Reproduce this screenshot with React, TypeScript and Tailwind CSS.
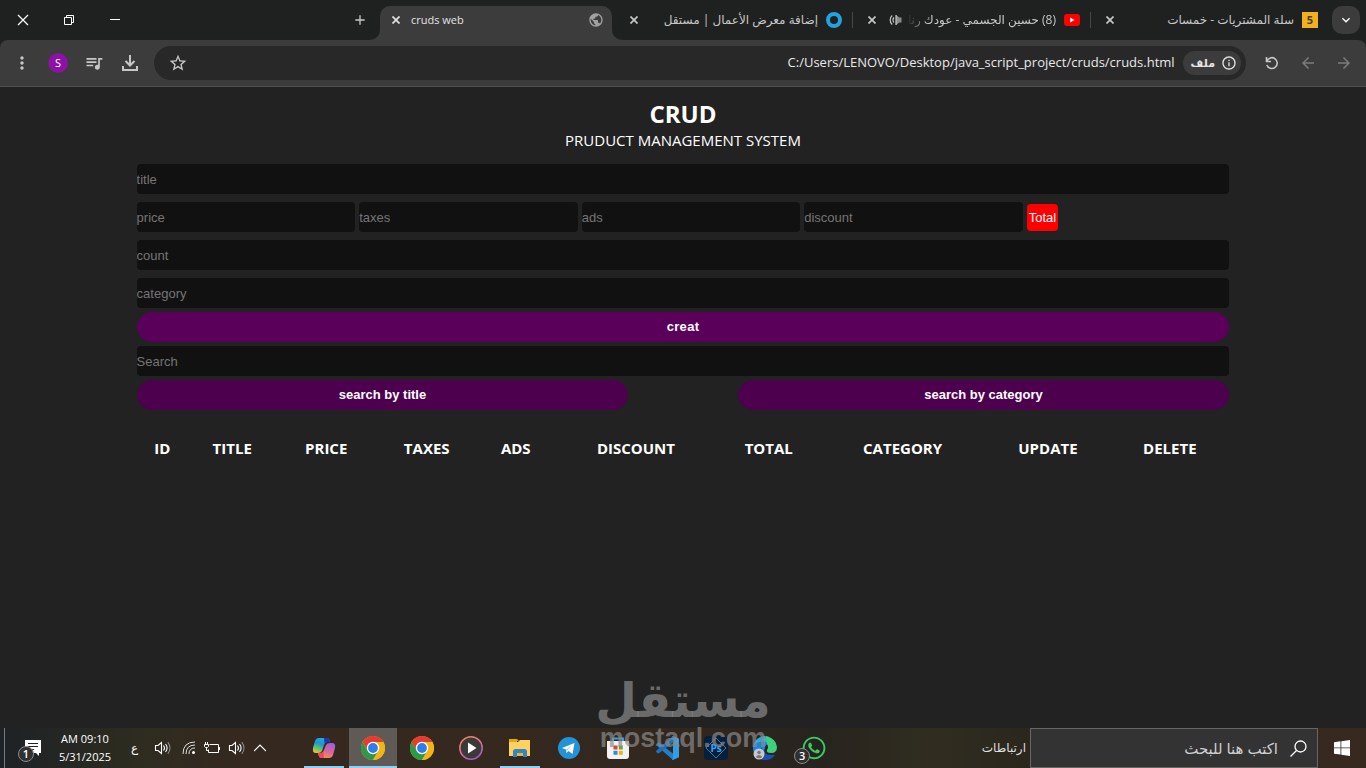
import type { ReactNode } from "react";
import clsx from "clsx";
import {
  MdAdd,
  MdArrowBack,
  MdArrowForward,
  MdInfoOutline,
  MdKeyboardArrowDown,
  MdMoreVert,
  MdPublic,
  MdQueueMusic,
  MdStarBorder,
} from "react-icons/md";
import { FaWhatsapp } from "react-icons/fa";

const FIELD =
  "block h-[30px] rounded bg-[#111111] text-[13px] text-white outline-none placeholder:text-[#757575] placeholder:opacity-100";

const COLUMNS = [
  { name: "ID", width: "w-[4.7%]" },
  { name: "TITLE", width: "w-[8.1%]" },
  { name: "PRICE", width: "w-[9.1%]" },
  { name: "TAXES", width: "w-[9.3%]" },
  { name: "ADS", width: "w-[7%]" },
  { name: "DISCOUNT", width: "w-[15%]" },
  { name: "TOTAL", width: "w-[9.3%]" },
  { name: "CATEGORY", width: "w-[15.2%]" },
  { name: "UPDATE", width: "w-[11.4%]" },
  { name: "DELETE", width: "w-[10.9%]" },
];

function Field({ name, className }: { name: string; className?: string }) {
  return (
    <input
      type="text"
      placeholder={name}
      aria-label={name}
      className={clsx(FIELD, className)}
    />
  );
}

function WindowButton({ label, children }: { label: string; children: ReactNode }) {
  return (
    <button aria-label={label} className="flex h-10 w-[46px] items-center justify-center text-white">
      <svg width="12" height="12" viewBox="0 0 12 12" fill="none" stroke="currentColor">
        {children}
      </svg>
    </button>
  );
}

function CloseTab() {
  return (
    <button aria-label="close tab" className="shrink-0 p-[3px]">
      <svg width="8" height="8" viewBox="0 0 8 8" fill="none" stroke="currentColor" strokeWidth="1.7">
        <path d="M.5.5l7 7M7.500.5l-7 7" />
      </svg>
    </button>
  );
}

function Tab({
  title,
  icon,
  extra,
  divider,
}: {
  title: string;
  icon: ReactNode;
  extra?: ReactNode;
  divider?: boolean;
}) {
  return (
    <div
      className={clsx(
        "flex h-7 w-[238px] shrink-0 items-center pr-[11px] pl-3 text-[#c7c7c7]",
        divider && "relative after:absolute after:right-0 after:top-1.5 after:h-4 after:w-px after:bg-[#474747]"
      )}
    >
      <CloseTab />
      {extra}
      <span
        dir="rtl"
        className={clsx(
          "ml-1 min-w-0 flex-1 overflow-hidden text-xs whitespace-nowrap",
          extra && "mask-r-from-100% mask-l-from-85% mask-l-to-100%"
        )}
      >
        {title}
      </span>
      <span className="ml-2 flex h-4 w-4 shrink-0 items-center justify-center">{icon}</span>
    </div>
  );
}

function TabStrip() {
  return (
    <div className="flex h-10 items-center bg-[#1f2120] pr-1.5 font-['Open_Sans','DejaVu_Sans',sans-serif]">
      <WindowButton label="close">
        <path d="M1 1l10 10M11 1L1 11" strokeWidth="1.2" />
      </WindowButton>
      <WindowButton label="restore">
        <path d="M1.5 3.5h7v7h-7zM3.5 3.5v-2h7v7h-2" />
      </WindowButton>
      <WindowButton label="minimize">
        <path d="M1 5.5h10" />
      </WindowButton>
      <div className="flex-1" />
      <button aria-label="new tab" className="mr-1.5 flex h-7 w-7 items-center justify-center text-[#c7c7c7]">
        <MdAdd className="h-4 w-4" />
      </button>
      <div className="relative mr-[3px] flex h-[34px] w-[232px] shrink-0 items-center self-end rounded-t-[10px] bg-[#3c3c3c] pr-2 pb-1.5 pl-[9px] text-[#e3e3e3]">
        <svg className="absolute bottom-0 -left-2.5" width="10" height="10" viewBox="0 0 10 10">
          <path d="M10 0v10H0A10 10 0 0 0 10 0z" fill="#3c3c3c" />
        </svg>
        <svg className="absolute -right-2.5 bottom-0" width="10" height="10" viewBox="0 0 10 10">
          <path d="M0 0v10h10A10 10 0 0 1 0 0z" fill="#3c3c3c" />
        </svg>
        <CloseTab />
        <span className="ml-2 flex-1 text-[11px]">cruds web</span>
        <MdPublic className="h-4 w-4 text-[#a0a0a0]" />
      </div>
      <Tab
        divider
        title="إضافة معرض الأعمال | مستقل"
        icon={
          <svg width="16" height="16" viewBox="0 0 16 16">
            <circle cx="8" cy="8" r="6" fill="none" stroke="#22a3df" strokeWidth="4" />
          </svg>
        }
      />
      <Tab
        divider
        title="(8) حسين الجسمي - عودك رنان"
        extra={
          <svg className="ml-2.5 shrink-0" width="14" height="14" viewBox="0 0 14 14" fill="none" stroke="currentColor" strokeWidth="1.2">
            <path d="M12.5 4.5v5h-2L7 12V2l3.5 2.500z" fill="#8a8a8a" stroke="none" />
            <path d="M5 4.500a3.500 3.500 0 0 0 0 5M3.200 2.500a6 6 0 0 0 0 9M7 2v10" />
          </svg>
        }
        icon={
          <svg width="16" height="12" viewBox="0 0 16 12">
            <rect width="16" height="12" rx="3" fill="#ff0000" />
            <path d="M6.200 3.500v5L10.500 6z" fill="#fff" />
          </svg>
        }
      />
      <Tab
        title="سلة المشتريات - خمسات"
        icon={
          <span className="flex h-4 w-4 items-center justify-center bg-[#f2b01e] text-[11px] font-bold text-[#4a3a10]">
            5
          </span>
        }
      />
      <button
        aria-label="search tabs"
        className="ml-[3px] flex h-7 w-7 shrink-0 items-center justify-center rounded-[10px] bg-[#3c3c3c] text-white"
      >
        <MdKeyboardArrowDown className="h-4 w-4" />
      </button>
    </div>
  );
}

function ToolbarButton({ label, dim, children }: { label: string; dim?: boolean; children: ReactNode }) {
  return (
    <button
      aria-label={label}
      className={clsx("flex h-9 w-9 shrink-0 items-center justify-center", dim ? "text-[#7c7c7c]" : "text-[#c7c7c7]")}
    >
      {children}
    </button>
  );
}

function Toolbar() {
  return (
    <div className="bg-[#1f2120]">
      <div className="flex h-[47px] items-center rounded-t-lg border-b border-[#505050] bg-[#3c3c3c] px-1 font-['Open_Sans','DejaVu_Sans',sans-serif]">
        <ToolbarButton label="menu">
          <MdMoreVert className="h-5 w-5" />
        </ToolbarButton>
        <ToolbarButton label="profile">
          <span className="flex h-5 w-5 items-center justify-center rounded-full bg-[#8a12a4] text-[11px] text-white">S</span>
        </ToolbarButton>
        <ToolbarButton label="media">
          <MdQueueMusic className="h-5 w-5" />
        </ToolbarButton>
        <ToolbarButton label="downloads">
          <svg width="18" height="18" viewBox="0 0 18 18" fill="none" stroke="currentColor" strokeWidth="2">
            <path d="M9 1v10M4.500 7L9 11.500 13.500 7M2 12v4h14v-4" />
          </svg>
        </ToolbarButton>
        <div className="mx-1.5 flex h-[34px] min-w-0 flex-1 items-center rounded-full bg-[#282828] pr-[5px] pl-3.5">
          <button aria-label="bookmark">
            <MdStarBorder className="h-5 w-5 text-[#c7c7c7]" />
          </button>
          <input
            aria-label="address"
            defaultValue="C:/Users/LENOVO/Desktop/java_script_project/cruds/cruds.html"
            className="min-w-0 flex-1 bg-transparent text-right text-[13px] text-[#e8e8e8] outline-none"
          />
          <button className="ml-2 flex h-6 items-center gap-1.5 rounded-full bg-[#3c3c3c] pr-1 pl-2 text-[11px] font-bold text-[#e3e3e3]">
            ملف
            <MdInfoOutline className="h-4 w-4" />
          </button>
        </div>
        <div className="ml-0.5 flex">
          <ToolbarButton label="reload">
            <svg width="14" height="14" viewBox="0 0 14 14" fill="none" stroke="currentColor" strokeWidth="1.600">
              <path d="M1.500 1v4.500H6M1.800 5.200A5.400 5.400 0 1 1 1.800 9" />
            </svg>
          </ToolbarButton>
          <ToolbarButton label="back" dim>
            <MdArrowBack className="h-[18px] w-[18px]" />
          </ToolbarButton>
          <ToolbarButton label="forward" dim>
            <MdArrowForward className="h-[18px] w-[18px]" />
          </ToolbarButton>
        </div>
      </div>
    </div>
  );
}

function Crud() {
  return (
    <main className="flex-1 bg-[#222222] font-['Open_Sans',sans-serif] text-white">
      <div className="mx-auto w-4/5">
        <header className="pt-[11px] text-center">
          <h1 className="text-2xl leading-8 font-bold">CRUD</h1>
          <p className="text-[15px] leading-5">PRUDUCT MANAGEMENT SYSTEM</p>
        </header>
        <form className="mt-3.5 font-['Liberation_Sans',sans-serif]" onSubmit={(e) => e.preventDefault()}>
          <Field name="title" className="w-full" />
          <div className="my-2 flex items-center gap-1">
            <Field name="price" className="w-1/5" />
            <Field name="taxes" className="w-1/5" />
            <Field name="ads" className="w-1/5" />
            <Field name="discount" className="w-1/5" />
            <output className="rounded bg-[#ff0000] px-0.5 py-1 text-[13px] leading-[19px]">Total</output>
          </div>
          <Field name="count" className="w-full" />
          <Field name="category" className="mt-2 w-full" />
          <button className="mt-1 h-[30px] w-full rounded-full bg-[#5a005a] text-[13px] font-bold tracking-wide">creat</button>
          <Field name="Search" className="mt-1 w-full" />
          <div className="mt-1 flex justify-between text-[13px] font-bold">
            <button className="h-[30px] w-[45%] rounded-full bg-[#4d004d]">search by title</button>
            <button className="h-[30px] w-[45%] rounded-full bg-[#4d004d]">search by category</button>
          </div>
        </form>
        <table className="mt-7 w-full table-fixed text-[15px] leading-5">
          <thead>
            <tr>
              {COLUMNS.map((c) => (
                <th key={c.name} className={clsx("p-0 text-center font-bold", c.width)}>
                  {c.name}
                </th>
              ))}
            </tr>
          </thead>
          <tbody />
        </table>
      </div>
    </main>
  );
}

function Speaker() {
  return (
    <svg width="18" height="16" viewBox="0 0 18 16" fill="none" stroke="#fff" strokeWidth="1.100">
      <path d="M1.500 5.500h2.500L7.500 2.500v11L4 10.500H1.500z" />
      <path d="M9.500 5.500q2 2.500 0 5M11.500 4q3.200 4 0 8" />
      <path d="M13.800 2.200q4.400 5.800 0 11.600" stroke="#888" />
    </svg>
  );
}

function Chrome() {
  return (
    <svg width="24" height="24" viewBox="0 0 24 24">
      <circle cx="12" cy="12" r="12" fill="#f2b517" />
      <path d="M1.600 6A12 12 0 0 1 22.400 6H12L6.800 15z" fill="#e63b2e" />
      <path d="M1.600 6A12 12 0 0 0 12 24l5.200-9L12 17.500 6.800 15z" fill="#2c9948" />
      <path d="M12 6h10.400A12 12 0 0 1 12 24l5.200-9z" fill="#f2b517" />
      <circle cx="12" cy="12" r="6.200" fill="#fff" />
      <circle cx="12" cy="12" r="4.900" fill="#2f7cec" />
    </svg>
  );
}

function Copilot() {
  return (
    <svg width="24" height="24" viewBox="0 0 24 24">
      <defs>
        <linearGradient id="cpLeft" x1="0.600" y1="0" x2="0.200" y2="1">
          <stop offset="0" stopColor="#22a7f0" />
          <stop offset="0.400" stopColor="#2196c9" />
          <stop offset="0.650" stopColor="#4fc07b" />
          <stop offset="1" stopColor="#f2c22b" />
        </linearGradient>
        <linearGradient id="cpRight" x1="0.700" y1="0" x2="0.300" y2="1">
          <stop offset="0" stopColor="#a05ce0" />
          <stop offset="0.500" stopColor="#d9659c" />
          <stop offset="1" stopColor="#f5914e" />
        </linearGradient>
      </defs>
      <path d="M7 2h8q2 0 3 4h-3q-2 0-3 3l-2 6q-1 2-4 2H4q-4 0-3-5l2-7q1-3 4-3z" fill="url(#cpLeft)" />
      <path d="M12 2h3q2 0 3 4h-3q-1.500 0-2.500 1.500z" fill="#1638b8" />
      <path d="M17 22H9q-2 0-3-5h3q2 0 3-3l2-5q1-2 4-2h2q4 0 3 5l-2 7q-1 3-4 3z" fill="url(#cpRight)" />
      <path d="M12 22H9q-2 0-3-5h3q1.500 0 2.500-1.500z" fill="#ef4a5b" />
    </svg>
  );
}

function MediaPlayer() {
  return (
    <svg width="24" height="24" viewBox="0 0 24 24">
      <defs>
        <linearGradient id="mpRing" x1="0" y1="0" x2="0.500" y2="1">
          <stop offset="0" stopColor="#ef8a45" />
          <stop offset="0.500" stopColor="#e5758a" />
          <stop offset="1" stopColor="#a95bc5" />
        </linearGradient>
      </defs>
      <circle cx="12" cy="12" r="11.200" fill="#3a3a3a" stroke="url(#mpRing)" strokeWidth="1.500" />
      <path d="M9 6.500v11l8.500-5.500z" fill="#fff" />
    </svg>
  );
}

function Explorer() {
  return (
    <svg width="24" height="24" viewBox="0 0 24 24">
      <path d="M1 3h8l2 2h-2v4H1z" fill="#e6a515" />
      <path d="M1 6h9l2-2h10v16H1z" fill="#ffd15f" />
      <path d="M5 21v-5.500q0-2.500 2.500-2.500h9q2.500 0 2.500 2.500V21h-4v-4H9v4z" fill="#2f86d0" />
      <path d="M9 17h6v3H9z" fill="#f3b52b" />
    </svg>
  );
}

function Telegram() {
  return (
    <svg width="22" height="22" viewBox="0 0 22 22">
      <circle cx="11" cy="11" r="11" fill="#2293d5" />
      <path d="M4 11L16.500 6l-2 11-4-3-2 2-.6-3.600z" fill="#fff" />
      <path d="M7.900 12.400L14 8l-4.600 5.400-.9 2.600z" fill="#b9d9ec" />
    </svg>
  );
}

function Store() {
  return (
    <svg width="24" height="24" viewBox="0 0 24 24">
      <path d="M7 6V2.500h10V6" fill="none" stroke="#2ba2e6" strokeWidth="2" />
      <path d="M1 5h22v15q0 3-3 3H4q-3 0-3-3z" fill="#f2f2f2" />
      <path d="M7.500 9.500h4v4h-4z" fill="#e5432d" />
      <path d="M12.800 9.500h4v4h-4z" fill="#75a52e" />
      <path d="M7.500 14.800h4v4h-4z" fill="#1f94dd" />
      <path d="M12.800 14.800h4v4h-4z" fill="#f3b11b" />
    </svg>
  );
}

function VsCode() {
  return (
    <svg width="24" height="24" viewBox="0 0 24 24">
      <path d="M1 8.200L3.200 6.200 18 17.500V24L1.200 9.200z" fill="#1f7fca" />
      <path d="M1 15.800L3.200 17.800 18 6.500V0L1.200 14.800z" fill="#1a72bd" />
      <path d="M18 0l6 2.800v18.400L18 24l-1-.6 1-1.400V2l-1-1.400z" fill="#2f9fe8" />
    </svg>
  );
}

function Photoshop() {
  return (
    <span className="relative flex h-6 w-6 items-center justify-center rounded-[4px] bg-[#06203c] text-[10px] font-bold text-[#31a8ff]">
      <svg className="absolute inset-0" width="24" height="24" viewBox="0 0 24 24" fill="none" stroke="#53748f">
        <path d="M12 2l10 10-10 10L2 12z" />
      </svg>
      <span className="relative">Ps</span>
    </span>
  );
}

function Edge() {
  return (
    <svg width="24" height="24" viewBox="0 0 24 24">
      <path d="M12 0A12 12 0 0 0 0 12q0 7 6 10.500 8 3 15-3-4 2-8-1-3-3-1-6.500 0-4 5-4z" fill="#1c86dc" />
      <path d="M1 9A12 12 0 0 1 16 .8l2 8Q12 4 6 6 3 7 1 9z" fill="#2bb0d8" />
      <path d="M14 .4A12 12 0 0 1 24 11q0 6-6 6-5 0-4-3 2-3 0-6-1-3-1-8z" fill="#3fd07a" />
      <path d="M9 11q-1 9 13 8A12 12 0 0 1 10 23.800Q5 17 9 11z" fill="#1b4fb0" />
      <circle cx="6" cy="18" r="5.500" fill="#c9c9c9" />
      <circle cx="6" cy="16.500" r="1.800" fill="#777" />
      <path d="M2.800 21q3.200-4 6.400 0-3 2.500-6.400 0z" fill="#777" />
    </svg>
  );
}

function Badge({ count, className }: { count: number; className: string }) {
  return (
    <span
      className={clsx(
        "absolute flex h-4 w-4 items-center justify-center rounded-full border border-[#8a8a8a] bg-[#303030] text-[11px] font-semibold text-white",
        className
      )}
    >
      {count}
    </span>
  );
}

const APPS: { name: string; icon: ReactNode; state?: "open" | "active" }[] = [
  { name: "Copilot", icon: <Copilot />, state: "open" },
  { name: "Chrome", icon: <Chrome />, state: "active" },
  { name: "Chrome profile", icon: <Chrome /> },
  { name: "Media Player", icon: <MediaPlayer /> },
  { name: "File Explorer", icon: <Explorer />, state: "open" },
  { name: "Telegram", icon: <Telegram /> },
  { name: "Store", icon: <Store /> },
  { name: "VS Code", icon: <VsCode /> },
  { name: "Photoshop", icon: <Photoshop /> },
  { name: "Edge", icon: <Edge /> },
  {
    name: "WhatsApp",
    icon: (
      <>
        <FaWhatsapp className="h-[26px] w-[26px] text-[#35cf62]" />
        <Badge count={3} className="bottom-1 left-1" />
      </>
    ),
  },
];

function Taskbar() {
  return (
    <footer className="flex h-10 items-center bg-[linear-gradient(to_right,#1d2226,#2e2c20_10%,#35281f_18%,#33281f_47%,#27231e_60%,#302d20_68%,#2a261d_76%,#38291f)] font-['Open_Sans','DejaVu_Sans',sans-serif] text-white">
      <div className="ml-1 h-full w-px bg-[#77797a]" />
      <button aria-label="notifications" className="relative flex h-10 w-11 items-center justify-center pl-3">
        <svg width="16" height="16" viewBox="0 0 16 16">
          <path d="M0 0h16v13h-2v3l-3-3H0z" fill="#fff" />
          <path d="M3 3.500h10M3 6.500h10M3 9.500h6" stroke="#222" />
        </svg>
        <Badge count={1} className="bottom-1.5 left-[13px]" />
      </button>
      <div className="w-[72px] text-center text-[11px] leading-[18px]">
        <div>AM 09:10</div>
        <div>5/31/2025</div>
      </div>
      <div className="ml-2.5 flex items-center">
        <span className="mr-4 text-xs">ع</span>
        <Speaker />
        <svg className="ml-2.5" width="14" height="14" viewBox="0 0 14 14" fill="none" stroke="#ddd">
          <path d="M1 13Q1 1 13 1M4 13q0-9 9-9M7 13q0-6 6-6" />
          <circle cx="11.500" cy="11.500" r="1.500" fill="#fff" stroke="none" />
        </svg>
        <svg className="ml-2" width="16" height="12" viewBox="0 0 16 12" fill="none" stroke="#fff">
          <path d="M5.500 2.500h9v8h-10V7.500M15.500 5v3M1.500 0v2.500M3.500 0v2.500M.5 2.500h4v2l-1 1h-2l-1-1zM2.500 5.500v3h2" />
        </svg>
        <span className="ml-2">
          <Speaker />
        </span>
        <button aria-label="hidden icons" className="ml-2">
          <svg width="12" height="8" viewBox="0 0 12 8" fill="none" stroke="#fff" strokeWidth="1.2">
            <path d="M0 7l6-6 6 6" />
          </svg>
        </button>
      </div>
      <nav className="ml-[34px] flex gap-px">
        {APPS.map((app) => (
          <button
            key={app.name}
            aria-label={app.name}
            className={clsx(
              "relative flex h-10 w-12 items-center justify-center",
              app.state === "active" && "bg-[#5f5a55]",
              app.state && "after:absolute after:bottom-0 after:h-0.5 after:bg-[#8fd0f2]",
              app.state === "active" && "after:inset-x-0",
              app.state === "open" && "after:inset-x-1"
            )}
          >
            {app.icon}
          </button>
        ))}
      </nav>
      <div className="flex-1" />
      <span dir="rtl" className="mr-1 text-xs text-[#dddddd]">
        ارتباطات
      </span>
      <label className="flex h-10 w-72 items-center border border-[#6a6662] bg-[#333333] pr-2.5">
        <input
          dir="rtl"
          type="text"
          aria-label="search"
          placeholder="اكتب هنا للبحث"
          className="min-w-0 flex-1 bg-transparent text-[15px] outline-none placeholder:text-[#cfcfcf] placeholder:opacity-100"
        />
        <svg className="ml-3" width="17" height="17" viewBox="0 0 17 17" fill="none" stroke="#fff" strokeWidth="1.3">
          <circle cx="10.500" cy="6.500" r="5.500" />
          <path d="M6.500 10.500L.5 16.500" />
        </svg>
      </label>
      <button aria-label="start" className="flex h-10 w-12 items-center justify-center">
        <svg width="16" height="16" viewBox="0 0 16 16" fill="#fff">
          <path d="M0 2.200L6.500 1.300v6.200H0zM7.300 1.200L16 0v7.500H7.300zM0 8.300h6.500v6.300L0 13.700zM7.300 8.300H16V16l-8.700-1.200z" />
        </svg>
      </button>
    </footer>
  );
}

function Watermark() {
  return (
    <div className="pointer-events-none absolute bottom-4 left-1/2 flex -translate-x-1/2 flex-col items-center font-bold text-[#8b8b8b]/70">
      <span dir="rtl" className="font-['DejaVu_Sans',sans-serif] text-[48px] leading-[48px]">
        مستقل
      </span>
      <span className="font-['Liberation_Sans',sans-serif] text-[27px] leading-7">mostaql.com</span>
    </div>
  );
}

export default function App() {
  return (
    <div className="relative flex min-h-screen flex-col bg-[#222222]">
      <TabStrip />
      <Toolbar />
      <Crud />
      <Taskbar />
      <Watermark />
    </div>
  );
}
